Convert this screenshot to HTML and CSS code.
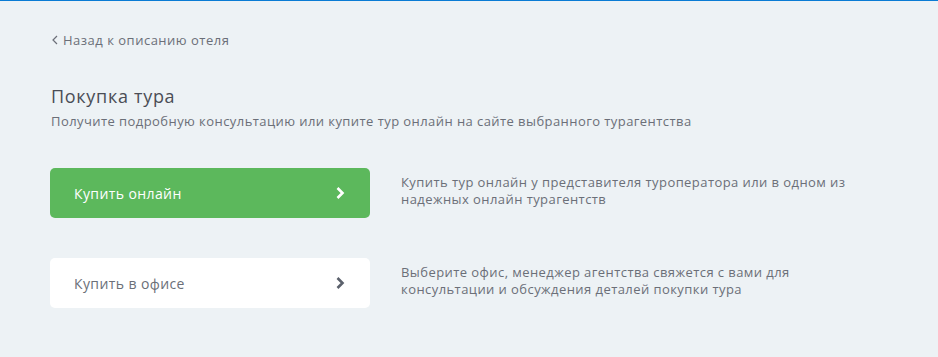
FILE: index.html
```html
<!DOCTYPE html>
<html lang="ru">
<head>
    <meta charset="UTF-8">
    <title>Покупка тура</title>
    <link rel="stylesheet" href="styles.css">
</head>
<body>
    <div class="page">
        <a class="back-link" href="#">
            <svg class="back-icon" width="6" height="10" viewBox="0 0 6 10"><path d="M5 1L1 5l4 4" fill="none" stroke="currentColor" stroke-width="1.2"/></svg>
            Назад к описанию отеля
        </a>

        <h2 class="title">Покупка тура</h2>
        <p class="subtitle">Получите подробную консультацию или купите тур онлайн на сайте выбранного турагентства</p>

        <div class="options">
            <div class="option">
                <a class="option-btn option-btn--green" href="#">
                    Купить онлайн
                    <svg width="10" height="14" viewBox="0 0 10 14"><path d="M2.5 2l5 5-5 5" fill="none" stroke="currentColor" stroke-width="2.6"/></svg>
                </a>
                <p class="option-desc">Купить тур онлайн у представителя туроператора или в одном из надежных онлайн турагентств</p>
            </div>
            <div class="option">
                <a class="option-btn option-btn--white" href="#">
                    Купить в офисе
                    <svg width="10" height="14" viewBox="0 0 10 14"><path d="M2.5 2l5 5-5 5" fill="none" stroke="currentColor" stroke-width="2.6"/></svg>
                </a>
                <p class="option-desc">Выберите офис, менеджер агентства свяжется с вами для консультации и обсуждения деталей покупки тура</p>
            </div>
        </div>
    </div>
</body>
</html>
```

FILE: styles.css
```css
body {
    margin: 0;
    font-family: "Open Sans", Arial, sans-serif;
    background-color: #edf2f5;
    border-top: 1px solid #0a7bd4;
    height: 356px;
    overflow: hidden;
}

.page {
    padding: 30px 50px 0 51px;
}

.back-link {
    display: flex;
    align-items: center;
    gap: 5px;
    color: #6b6f78;
    font-size: 13px;
    letter-spacing: 0.5px;
    text-decoration: none;
    line-height: 18px;
}

.back-icon {
    margin-left: 1px;
}

.title {
    margin: 35px 0 0;
    font-size: 18px;
    font-weight: 400;
    letter-spacing: 0.7px;
    color: #4a4d55;
    line-height: 24px;
}

.subtitle {
    margin: 4px 0 0;
    font-size: 13px;
    letter-spacing: 0.43px;
    color: #6b6f78;
    line-height: 18px;
}

.options {
    margin-top: 38px;
    display: flex;
    flex-direction: column;
    gap: 40px;
}

.option {
    display: flex;
    align-items: flex-start;
    gap: 31px;
}

.option-btn {
    flex: 0 0 auto;
    box-sizing: border-box;
    width: 320px;
    height: 50px;
    margin-left: -1px;
    padding: 0 25px 0 24px;
    border-radius: 5px;
    display: flex;
    align-items: center;
    justify-content: space-between;
    font-size: 14px;
    letter-spacing: 0.4px;
    text-decoration: none;
}

.option-btn--green {
    background-color: #5cb85c;
    color: #ffffff;
}

.option-btn--white {
    background-color: #ffffff;
    color: #6b6f78;
}

.option-btn--white svg {
    color: #5b616c;
}

.option-desc {
    margin: 6px 0 0;
    max-width: 470px;
    font-size: 13px;
    letter-spacing: 0.43px;
    line-height: 17px;
    color: #6b6f78;
}
```
